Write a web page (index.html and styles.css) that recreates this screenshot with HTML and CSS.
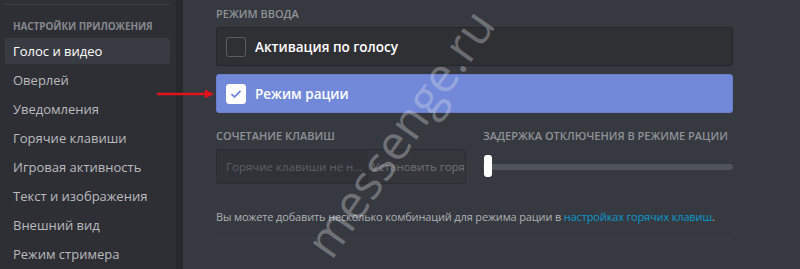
FILE: index.html
```html
<html lang="ru">
<head>
  <meta charset="UTF-8">
  <title>Голос и видео</title>
  <link rel="stylesheet" href="styles.css">
</head>
<body>
  <div class="app">
    <nav class="sidebar">
      <div class="sidebar-sep"></div>
      <div class="sidebar-header">Настройки приложения</div>
      <div class="nav-item active">Голос и видео</div>
      <div class="nav-item">Оверлей</div>
      <div class="nav-item">Уведомления</div>
      <div class="nav-item">Горячие клавиши</div>
      <div class="nav-item">Игровая активность</div>
      <div class="nav-item">Текст и изображения</div>
      <div class="nav-item">Внешний вид</div>
      <div class="nav-item">Режим стримера</div>
    </nav>

    <main class="content">
      <div class="section-title">Режим ввода</div>

      <div class="option">
        <span class="checkbox"></span>
        <span class="option-label">Активация по голосу</span>
      </div>
      <div class="option selected">
        <span class="checkbox checked">
          <svg width="12" height="10" viewBox="0 0 12 10"><path d="M1.5 5.2 L4.5 8 L10.5 1.8" fill="none" stroke="#7289da" stroke-width="1.8"/></svg>
        </span>
        <span class="option-label">Режим рации</span>
      </div>

      <div class="row">
        <div class="col-keys">
          <div class="section-title">Сочетание клавиш</div>
          <div class="keybind">
            <span class="keybind-input">Горячие клавиши не н...</span>
            <span class="keybind-btn">Установить горяч</span>
          </div>
        </div>
        <div class="col-delay">
          <div class="section-title">Задержка отключения в режиме рации</div>
          <div class="slider">
            <div class="slider-track"></div>
            <div class="slider-thumb"></div>
          </div>
        </div>
      </div>

      <p class="hint">Вы можете добавить несколько комбинаций для режима рации в <a href="#">настройках горячих клавиш</a>.</p>
      <div class="divider"></div>
    </main>

    <svg class="arrow" width="60" height="10" viewBox="0 0 60 10">
      <line x1="0" y1="5" x2="52" y2="5" stroke="#e0141b" stroke-width="2.5"/>
      <path d="M48 0.5 L57 5 L48 9.5 Z" fill="#e0141b"/>
    </svg>
    <div class="watermark">messenge.ru</div>
  </div>
</body>
</html>
```
FILE: styles.css
```css
body {
  margin: 0;
  padding: 0;
  font-family: "Open Sans", "Noto Sans", sans-serif;
  background-color: #36393f;
  overflow: hidden;
}

.app {
  position: relative;
  display: flex;
  height: 269px;
}

.sidebar {
  width: 183px;
  background: #2e2f34;
  border-right: 7px solid #28292d;
  padding: 4px 6px 0 5px;
  box-sizing: border-box;
  flex-shrink: 0;
}

.sidebar-sep {
  height: 1px;
  background: #3e4046;
  margin-bottom: 14px;
}

.sidebar-header {
  font-size: 10px;
  font-weight: 700;
  text-transform: uppercase;
  color: #85888e;
  padding-left: 8px;
  height: 19px;
  white-space: nowrap;
  letter-spacing: -0.1px;
}

.nav-item {
  font-size: 13px;
  color: #b9bbbe;
  padding: 0 8px;
  height: 29px;
  line-height: 27px;
  border-radius: 3px;
}

.nav-item.active {
  background: #393b42;
  color: #fff;
  height: 26px;
  line-height: 26px;
  margin-bottom: 3px;
}

.content {
  padding: 6px 0 0 33px;
  width: 517px;
}

.section-title {
  font-size: 11px;
  font-weight: 600;
  text-transform: uppercase;
  color: #8e9297;
  height: 21px;
  white-space: nowrap;
}

.option {
  display: flex;
  align-items: center;
  height: 37px;
  background: #2f3034;
  border: 1px solid #25262a;
  border-radius: 3px;
  padding-left: 9px;
  margin-bottom: 8px;
}

.option.selected {
  background: #7289da;
  border-color: #6a7fcb;
}

.checkbox {
  width: 18px;
  height: 18px;
  border: 1px solid #5b5d63;
  border-radius: 3px;
  margin-right: 9px;
  display: flex;
  align-items: center;
  justify-content: center;
}

.checkbox.checked {
  background: #fff;
  border-color: #fff;
}

.option-label {
  font-size: 13.5px;
  font-weight: 600;
  color: #fff;
}

.row {
  display: flex;
  margin-top: 15px;
}

.col-keys {
  width: 250px;
  margin-right: 17px;
}

.col-delay {
  flex: 1;
}

.keybind {
  display: flex;
  height: 33px;
  border: 1px solid #2b2d31;
  background: #303237;
  border-radius: 3px;
  font-size: 11.5px;
  overflow: hidden;
}

.keybind-input {
  width: 142px;
  padding-left: 9px;
  line-height: 33px;
  color: #5d6066;
  white-space: nowrap;
  overflow: hidden;
}

.keybind-btn {
  flex: 1;
  background: #34363b;
  line-height: 33px;
  color: #6f7278;
  white-space: nowrap;
  padding-left: 4px;
  overflow: hidden;
}

.slider {
  position: relative;
  height: 33px;
  padding-top: 15px;
  box-sizing: border-box;
}

.slider-track {
  height: 6px;
  border-radius: 3px;
  background: #4f535a;
}

.slider-thumb {
  position: absolute;
  left: 1px;
  top: 6px;
  width: 8px;
  height: 22px;
  border-radius: 3px;
  background: #fff;
}

.hint {
  margin: 25px 0 0;
  font-size: 11px;
  letter-spacing: -0.15px;
  color: #aeb1b5;
  white-space: nowrap;
}

.hint a {
  color: #0a9ad0;
  text-decoration: none;
}

.divider {
  height: 1px;
  background: #3e4147;
  margin-top: 14px;
}

.arrow {
  position: absolute;
  left: 157px;
  top: 89px;
}

.watermark {
  position: absolute;
  left: 255px;
  top: 100px;
  font-size: 48px;
  color: rgba(220, 222, 226, 0.35);
  transform: rotate(-55deg);
  white-space: nowrap;
}
```
